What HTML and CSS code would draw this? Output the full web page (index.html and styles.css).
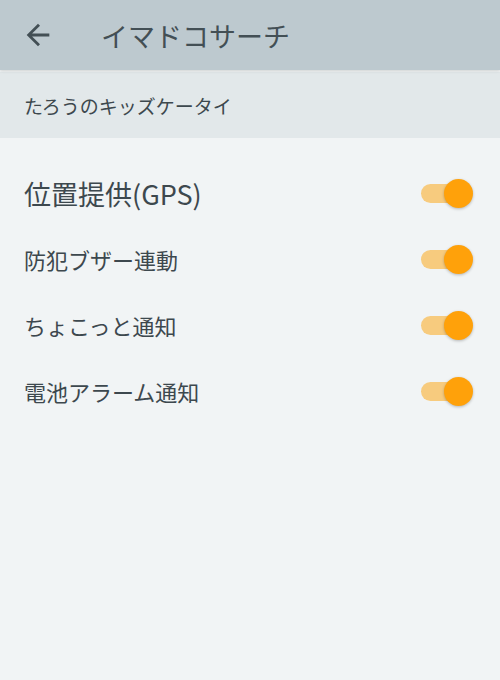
FILE: index.html
```html
<!DOCTYPE html>
<html lang="ja">
<head>
  <meta charset="UTF-8" />
  <meta name="viewport" content="width=device-width, initial-scale=1.0"/>
  <title>イマドコサーチ</title>
  <link rel="stylesheet" href="styles.css">
</head>
<body>
  <div class="header">
    <button class="back-button">
      <svg viewBox="0 0 24 24" width="34" height="34"><path d="M20 11H7.83l5.59-5.59L12 4l-8 8 8 8 1.41-1.41L7.83 13H20v-2z" fill="#434f55"/></svg>
    </button>
    <h1>イマドコサーチ</h1>
  </div>

  <div class="subheader">たろうのキッズケータイ</div>

  <div class="settings">
    <div class="row main">
      <span class="label">位置提供(GPS)</span>
      <span class="switch"><span class="track"></span><span class="thumb"></span></span>
    </div>
    <div class="row">
      <span class="label">防犯ブザー連動</span>
      <span class="switch"><span class="track"></span><span class="thumb"></span></span>
    </div>
    <div class="row">
      <span class="label">ちょこっと通知</span>
      <span class="switch"><span class="track"></span><span class="thumb"></span></span>
    </div>
    <div class="row">
      <span class="label">電池アラーム通知</span>
      <span class="switch"><span class="track"></span><span class="thumb"></span></span>
    </div>
  </div>
</body>
</html>
```

FILE: styles.css
```css
html, body {
  height: 100%;
}

body {
  margin: 0;
  font-family: "Noto Sans CJK JP", "Noto Sans", sans-serif;
  background: #f1f4f5;
  color: #3d484e;
}

.header {
  display: flex;
  align-items: center;
  height: 70px;
  background: #bdc9cf;
  box-shadow: 0 1px 3px rgba(0,0,0,0.15);
  position: relative;
  z-index: 1;
}

.back-button {
  display: flex;
  margin-left: 21px;
  padding: 0;
  border: none;
  background: none;
}

.header h1 {
  margin: 0 0 0 46px;
  font-size: 27px;
  font-weight: normal;
  color: #434f55;
  letter-spacing: 0;
}

.subheader {
  display: flex;
  align-items: center;
  height: 66px;
  margin-top: 2px;
  padding-left: 24px;
  background: #e2e8ea;
  font-size: 19px;
}

.settings {
  padding-top: 22px;
}

.row {
  display: flex;
  align-items: center;
  justify-content: space-between;
  height: 66px;
  padding: 0 27px 0 24px;
}

.row .label {
  font-size: 22px;
}

.row.main .label {
  font-size: 27px;
}

.switch {
  position: relative;
  width: 52px;
  height: 29px;
}

.track {
  position: absolute;
  left: 0;
  top: 5px;
  width: 46px;
  height: 19px;
  border-radius: 10px;
  background: #f7cb7e;
}

.thumb {
  position: absolute;
  right: 0;
  top: 0;
  width: 29px;
  height: 29px;
  border-radius: 50%;
  background: #ffa10a;
  box-shadow: 0 1px 3px rgba(0,0,0,0.25);
}
```
